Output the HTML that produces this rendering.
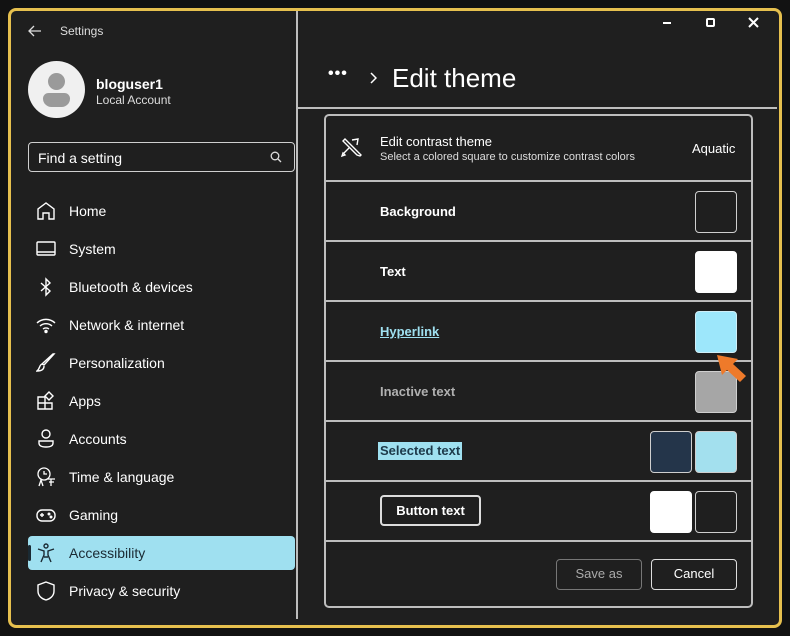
<!DOCTYPE html>
<html><head><meta charset="utf-8"><style>
*{box-sizing:border-box;margin:0;padding:0}
body{width:790px;height:636px;background:#121212;font-family:"Liberation Sans",sans-serif;color:#fff;position:relative;overflow:hidden}
.win{position:absolute;left:8px;top:8px;width:774px;height:620px;background:#1f1f1f;border:3px solid #e6c04e;border-radius:8px}
.a{position:absolute}
.nav{position:absolute;left:28px;width:267px;height:34px;border-radius:4px;font-size:14px;line-height:34px;padding-left:41px;color:#fff}
.nav svg{position:absolute;left:8px;top:7px}
.row{position:absolute;left:324px;width:429px;height:60px;border-top:2px solid #bdbdbd}
.lbl{position:absolute;left:56px;top:22px;font-size:13px;font-weight:bold}
.sw{position:absolute;top:9px;width:42px;height:42px;border-radius:4px;border:1.5px solid #cfcfcf}
.btn{position:absolute;height:31px;border:1.5px solid #ddd;border-radius:4px;font-size:13px;text-align:center;line-height:28px}
</style></head><body>
<div class="win"></div>
<svg class="a" style="left:28px;top:24px" width="14" height="14" viewBox="0 0 14 14" fill="none" stroke="#ddd" stroke-width="1.3"><path d="M13 7H1M6 2L1 7l5 5"/></svg>
<div class="a" style="left:60px;top:24px;font-size:12px;color:#ddd">Settings</div>
<div class="a" style="left:663px;top:22px;width:8px;height:1.5px;background:#fff"></div>
<div class="a" style="left:706px;top:18px;width:9px;height:9px;border:2px solid #fff;border-radius:2px"></div>
<svg class="a" style="left:748px;top:17px" width="11" height="11" viewBox="0 0 11 11" stroke="#fff" stroke-width="2"><path d="M1 1l9 9M10 1l-9 9"/></svg>
<div class="a" style="left:28px;top:61px;width:57px;height:57px;border-radius:50%;background:#f0f0f0"></div>
<div class="a" style="left:48px;top:73px;width:17px;height:17px;border-radius:50%;background:#9a9a9a"></div>
<div class="a" style="left:43px;top:93px;width:27px;height:14px;border-radius:6px 6px 9px 9px;background:#9a9a9a"></div>
<div class="a" style="left:96px;top:76px;font-size:14px;font-weight:bold">bloguser1</div>
<div class="a" style="left:96px;top:93px;font-size:12px;color:#ddd">Local Account</div>
<div class="a" style="left:28px;top:142px;width:267px;height:30px;border:1.5px solid #cfcfcf;border-radius:4px;font-size:14px;padding:7px 0 0 9px">Find a setting</div>
<svg class="a" style="left:270px;top:151px" width="12" height="12" viewBox="0 0 12 12" fill="none" stroke="#ddd" stroke-width="1.3"><circle cx="5" cy="5" r="3.8"/><path d="M8 8l3 3"/></svg>
<div class="nav" style="top:194px"><svg width="20" height="20" viewBox="0 0 20 20" fill="none" stroke="#fff" stroke-width="1.4"><path d="M2 18V8l8-6 8 6v10h-5v-6H7v6z"/></svg>Home</div>
<div class="nav" style="top:232px"><svg width="20" height="20" viewBox="0 0 20 20" fill="none" stroke="#fff" stroke-width="1.4"><rect x="1" y="3" width="18" height="13" rx="1"/><path d="M1 13h18"/></svg>System</div>
<div class="nav" style="top:270px"><svg width="20" height="20" viewBox="0 0 20 20" fill="none" stroke="#fff" stroke-width="1.4"><path d="M5 6l9 8-4 4V2l4 4-9 8"/></svg>Bluetooth &amp; devices</div>
<div class="nav" style="top:308px"><svg width="20" height="20" viewBox="0 0 20 20" fill="none" stroke="#fff" stroke-width="1.4"><path d="M1 8a13 13 0 0 1 18 0M4 11a9 9 0 0 1 12 0M7 14a5 5 0 0 1 6 0"/><circle cx="10" cy="16.5" r="1" fill="#fff"/></svg>Network &amp; internet</div>
<div class="nav" style="top:346px"><svg width="20" height="20" viewBox="0 0 20 20" fill="none" stroke="#fff" stroke-width="1.4"><path d="M18 1L8 12l-2-1 11-10zM6 11c-3 1-2 5-5 7 4 0 7-1 7-5"/></svg>Personalization</div>
<div class="nav" style="top:384px"><svg width="20" height="20" viewBox="0 0 20 20" fill="none" stroke="#fff" stroke-width="1.4"><path d="M2 6h7v12H2zM2 12h14v6H9M13 1l4 4-4 4-4-4z"/></svg>Apps</div>
<div class="nav" style="top:422px"><svg width="20" height="20" viewBox="0 0 20 20" fill="none" stroke="#fff" stroke-width="1.4"><circle cx="10" cy="5" r="4"/><path d="M3 12h14v2c0 3-3 4-7 4s-7-1-7-4z"/></svg>Accounts</div>
<div class="nav" style="top:460px"><svg width="20" height="20" viewBox="0 0 20 20" fill="none" stroke="#fff" stroke-width="1.3"><circle cx="8" cy="7" r="6"/><path d="M8 4v3h3M3 19l2-6 2 6M12 12h7M15 12v7M13 15h5"/></svg>Time &amp; language</div>
<div class="nav" style="top:498px"><svg width="20" height="20" viewBox="0 0 20 20" fill="none" stroke="#fff" stroke-width="1.4"><rect x="1" y="5" width="18" height="11" rx="5"/><path d="M4 10h4M6 8v4"/><circle cx="13" cy="9" r=".8" fill="#fff"/><circle cx="15" cy="12" r=".8" fill="#fff"/></svg>Gaming</div>
<div class="nav" style="top:536px;background:#9fe0f0;color:#1a2a33"><svg width="20" height="20" viewBox="0 0 20 20" fill="none" stroke="#1a2a33" stroke-width="1.4"><circle cx="10" cy="3" r="2"/><path d="M2 6l6 2v4l-3 7M18 6l-6 2v4l3 7M8 14h4"/></svg>Accessibility</div>
<div class="a" style="left:28px;top:545px;width:3px;height:16px;background:#1a2a33;border-radius:2px"></div>
<div class="nav" style="top:574px"><svg width="20" height="20" viewBox="0 0 20 20" fill="none" stroke="#fff" stroke-width="1.4"><path d="M10 1l8 3v6c0 5-4 8-8 9-4-1-8-4-8-9V4z"/></svg>Privacy &amp; security</div>
<div class="a" style="left:296px;top:11px;width:2px;height:608px;background:#bdbdbd"></div>
<div class="a" style="left:328px;top:65px;font-size:16px;font-weight:bold;letter-spacing:1px">•••</div>
<svg class="a" style="left:369px;top:72px" width="8" height="12" viewBox="0 0 8 12" fill="none" stroke="#fff" stroke-width="1.5"><path d="M2 1l5 5-5 5"/></svg>
<div class="a" style="left:392px;top:63px;font-size:26px">Edit theme</div>
<div class="a" style="left:298px;top:107px;width:479px;height:2px;background:#bdbdbd"></div>
<div class="a" style="left:324px;top:114px;width:429px;height:494px;border:2px solid #bdbdbd;border-radius:5px"></div>
<svg class="a" style="left:340px;top:136px" width="22" height="22" viewBox="0 0 22 22" fill="none" stroke="#fff" stroke-width="1.4"><path d="M3 5l2-2 16 16-1 1-3-1L3 5zM5 3l-2 2M12 4l6-1-1 6M4 17l6-6M2 20l3-1-2-2z"/></svg>
<div class="a" style="left:380px;top:134px;font-size:13px">Edit contrast theme</div>
<div class="a" style="left:380px;top:151px;font-size:11px;color:#ddd">Select a colored square to customize contrast colors</div>
<div class="a" style="left:692px;top:141px;font-size:13px">Aquatic</div>
<div class="row" style="top:180px"><div class="lbl">Background</div><div class="sw" style="left:371px;background:#1f1f1f"></div></div>
<div class="row" style="top:240px"><div class="lbl">Text</div><div class="sw" style="left:371px;background:#fff;border-color:#fff"></div></div>
<div class="row" style="top:300px"><div class="lbl" style="color:#9fe0f0;text-decoration:underline">Hyperlink</div><div class="sw" style="left:371px;background:#9de7fb;border-color:#cfeff8"></div></div>
<div class="row" style="top:360px"><div class="lbl" style="color:#b0b0b0">Inactive text</div><div class="sw" style="left:371px;background:#a6a6a6"></div></div>
<div class="row" style="top:420px"><div class="lbl" style="background:#9fe0f0;color:#1d3a4a;padding:0 2px;left:54px;top:20px;line-height:18px">Selected text</div><div class="sw" style="left:326px;background:#24354a"></div><div class="sw" style="left:371px;background:#a3e0ee"></div></div>
<div class="row" style="top:480px"><div class="btn" style="left:56px;top:13px;width:101px;font-weight:bold;border-width:2px">Button text</div><div class="sw" style="left:326px;background:#fff;border-color:#fff"></div><div class="sw" style="left:371px;background:#1f1f1f"></div></div>
<div class="row" style="top:540px;height:68px;border-bottom:none"></div>
<div class="btn" style="left:556px;top:559px;width:86px;color:#aaa;border-color:#777">Save as</div>
<div class="btn" style="left:651px;top:559px;width:86px">Cancel</div>
<svg class="a" style="left:0;top:0" width="790" height="636"><path d="M717 355L738 359L733 364L746 376L740 382L727 370L722 375Z" fill="#ee7a2a"/></svg>
</body></html>
